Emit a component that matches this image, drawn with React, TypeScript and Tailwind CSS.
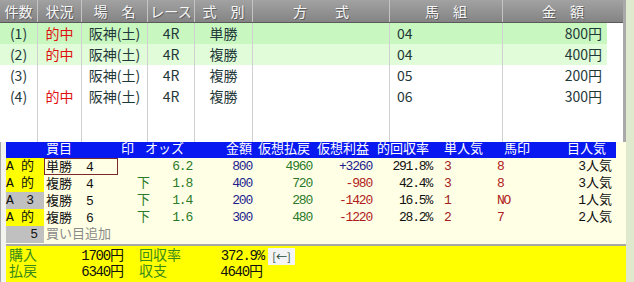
import React from "react"

const jp = "font-['Noto_Sans_CJK_JP',sans-serif]"
const mono = "font-['Liberation_Mono','Noto_Sans_CJK_JP',monospace]"

const topCols = [
  { label: "件数", w: "w-[38px]" },
  { label: "状況", w: "w-[44px]" },
  { label: "場　名", w: "w-[66px]" },
  { label: "レース", w: "w-[47px]" },
  { label: "式　別", w: "w-[58px]" },
  { label: "方　　式", w: "w-[137px]" },
  { label: "馬　組", w: "w-[113px]" },
]

const topRows = [
  { no: "(1)", hit: true, bg: "bg-[#c8f7c0]", kumi: "04", amt: "800円", kind: "単勝" },
  { no: "(2)", hit: true, bg: "bg-[#e0fcd8]", kumi: "04", amt: "400円", kind: "複勝" },
  { no: "(3)", hit: false, bg: "bg-white", kumi: "05", amt: "200円", kind: "複勝" },
  { no: "(4)", hit: true, bg: "bg-white", kumi: "06", amt: "300円", kind: "複勝" },
]

const bets = [
  { a: "A", b: "的", lbg: "bg-[#ffff00]", kind: "単勝", num: "4", mark: "", odds: "6.2", amt: "800", pay: "4960", profit: "+3260", rate: "291.8%", pop: "3", uma: "8", mpop: "3人気", boxed: true },
  { a: "A", b: "的", lbg: "bg-[#ffff00]", kind: "複勝", num: "4", mark: "下", odds: "1.8", amt: "400", pay: "720", profit: "-980", rate: "42.4%", pop: "3", uma: "8", mpop: "3人気", boxed: false },
  { a: "A", b: "3", lbg: "bg-[#c0c0c0]", kind: "複勝", num: "5", mark: "下", odds: "1.4", amt: "200", pay: "280", profit: "-1420", rate: "16.5%", pop: "1", uma: "NO", mpop: "1人気", boxed: false },
  { a: "A", b: "的", lbg: "bg-[#ffff00]", kind: "複勝", num: "6", mark: "下", odds: "1.6", amt: "300", pay: "480", profit: "-1220", rate: "28.2%", pop: "2", uma: "7", mpop: "2人気", boxed: false },
]

export default function App() {
  return (
    <div className="flex h-[282px] w-[634px] overflow-hidden bg-[#dfe9cd]">
      <div className="flex w-[626px] flex-col">
        {/* upper list */}
        <div className={`flex h-[142px] flex-col border-r-[3px] border-[#a9a9a9] bg-white ${jp}`}>
          <div className="flex h-[23px] border-b border-[#5a5a5a] bg-gradient-to-b from-[#a2a2a2] to-[#848484] text-[14px] leading-[22px] text-[#f6f6f6] [text-shadow:1px_1px_0_#5e5e5e]">
            {topCols.map((c) => (
              <div key={c.label} className={`${c.w} shrink-0 border-r border-[#c4c4c4] text-center whitespace-pre`}>
                {c.label}
              </div>
            ))}
            <div className="flex-1 text-center whitespace-pre">金　額</div>
          </div>
          <div className="flex flex-1">
            <div className="w-[607px] text-[14px] leading-[21px] text-[#1f3838]">
              {topRows.map((r) => (
                <div key={r.no} className={`flex h-[21px] ${r.bg}`}>
                  <div className="w-[38px] border-r border-[#d0d0d0] text-center">{r.no}</div>
                  <div className="w-[44px] border-r border-[#d0d0d0] text-center text-[#e01010]">{r.hit ? "的中" : ""}</div>
                  <div className="w-[66px] border-r border-[#d0d0d0] text-center">阪神(土)</div>
                  <div className="w-[47px] border-r border-[#d0d0d0] text-center">4R</div>
                  <div className="w-[58px] border-r border-[#d0d0d0] text-center">{r.kind}</div>
                  <div className="w-[137px] border-r border-[#d0d0d0]"></div>
                  <div className="w-[113px] border-r border-[#d0d0d0] pl-[7px]">{r.kumi}</div>
                  <div className="w-[104px] pr-[5px] text-right">{r.amt}</div>
                </div>
              ))}
              <div className="flex h-[35px]">
                <div className="w-[38px] border-r border-[#d0d0d0]"></div>
                <div className="w-[44px] border-r border-[#d0d0d0]"></div>
                <div className="w-[66px] border-r border-[#d0d0d0]"></div>
                <div className="w-[47px] border-r border-[#d0d0d0]"></div>
                <div className="w-[58px] border-r border-[#d0d0d0]"></div>
                <div className="w-[137px] border-r border-[#d0d0d0]"></div>
                <div className="w-[113px] border-r border-[#d0d0d0]"></div>
                <div className="w-[104px]"></div>
              </div>
            </div>
            <div className="flex-1 bg-white"></div>
          </div>
        </div>

        {/* lower betting panel */}
        <div className="flex flex-1">
          <div className="w-[6px] border-l border-[#a8a8a8] bg-[#f2f2ee]"></div>
          <div className={`flex w-[620px] flex-col bg-[#ffffe6] text-[13px] leading-[17px] ${mono}`}>
            <div className="flex h-[16px] w-[610px] bg-[#0818f0] leading-[16px] text-white">
              <div className="w-[40px]"></div>
              <div className="w-[75px]">買目</div>
              <div className="w-[24px]">印</div>
              <div className="w-[81px]">オッズ</div>
              <div className="w-[32px]">金額</div>
              <div className="w-[59px]">仮想払戻</div>
              <div className="w-[60px]">仮想利益</div>
              <div className="w-[67px]">的回収率</div>
              <div className="w-[60px]">単人気</div>
              <div className="w-[63px]">馬印</div>
              <div className="w-[49px]">目人気</div>
            </div>
            {bets.map((b, i) => (
              <div key={i} className="flex h-[17px]">
                <div className={`flex w-[38px] justify-between pr-[10px] ${b.lbg} text-[#111]`}>
                  <span>{b.a}</span>
                  <span>{b.b}</span>
                </div>
                <div className={`flex w-[74px] text-[#111] ${b.boxed ? "border border-[#7a2a2a]" : "border border-transparent"}`}>
                  <span className="w-[41px] pl-[1px]">{b.kind}</span>
                  <span>{b.num}</span>
                </div>
                <div className="w-[32px] pl-[19px] text-[#2a7a2a]">{b.mark}</div>
                <div className="w-[42px] text-right tracking-[-1.2px] text-[#2a7a2a]">{b.odds}</div>
                <div className="w-[60px] text-right tracking-[-1.2px] text-[#1c1c8c]">{b.amt}</div>
                <div className="w-[60px] text-right tracking-[-1.2px] text-[#2a7a2a]">{b.pay}</div>
                <div className={`w-[60px] text-right tracking-[-1.2px] ${b.profit.startsWith("+") ? "text-[#1c1c8c]" : "text-[#b01c1c]"}`}>{b.profit}</div>
                <div className="w-[60px] text-right tracking-[-1.2px] text-[#111]">{b.rate}</div>
                <div className="w-[53px] pl-[12px] text-[#a02020]">{b.pop}</div>
                <div className="w-[60px] pl-[12px] tracking-[-1.2px] text-[#b02020]">{b.uma}</div>
                <div className="w-[67px] text-right text-[#111]">{b.mpop}</div>
              </div>
            ))}
            <div className="flex h-[17px]">
              <div className="w-[38px] bg-[#c0c0c0] pr-[6px] text-right text-[#111]">5</div>
              <div className="pl-[2px] text-[#8a8a8a]">買い目追加</div>
            </div>
            <div className="mt-[1px] flex flex-1 flex-col border-t-2 border-[#a8a8a8] bg-[#ffff00] pt-[2px] pl-[1px] text-[14px] leading-[16px]">
              <div className="flex h-[16px]">
                <div className="w-[60px] pl-[2px] text-[#3a8a1a]">購入</div>
                <div className="w-[57px] text-right tracking-[-1.2px] text-[#111]">1700<span className="tracking-normal">円</span></div>
                <div className="w-[15px]"></div>
                <div className="w-[60px] text-[#3a8a1a]">回収率</div>
                <div className="w-[65px] text-right tracking-[-1.2px] text-[#111]">372.9%</div>
                <div className={`ml-[4px] h-[17px] w-[27px] bg-[#f4f4f4] text-center text-[11px] leading-[17px] text-[#1c4a3a] ${jp}`}>[←]</div>
              </div>
              <div className="flex h-[16px]">
                <div className="w-[60px] pl-[2px] text-[#3a8a1a]">払戻</div>
                <div className="w-[57px] text-right tracking-[-1.2px] text-[#111]">6340<span className="tracking-normal">円</span></div>
                <div className="w-[15px]"></div>
                <div className="w-[60px] text-[#3a8a1a]">収支</div>
                <div className="w-[64px] text-right tracking-[-1.2px] text-[#111]">4640<span className="tracking-normal">円</span></div>
              </div>
            </div>
          </div>
        </div>
      </div>
    </div>
  )
}
